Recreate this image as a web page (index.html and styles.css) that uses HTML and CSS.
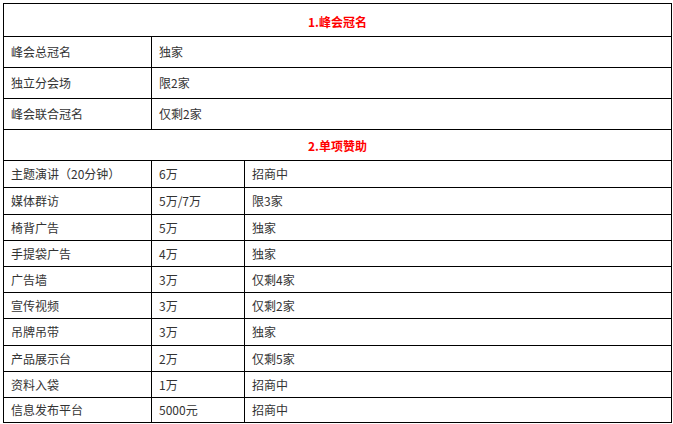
FILE: index.html
```html
<!DOCTYPE html>
<html lang="zh">
<head>
<meta charset="utf-8">
<title>赞助方案</title>
<link rel="stylesheet" href="styles.css">
</head>
<body>
<table class="sponsor">
  <colgroup>
    <col class="c1">
    <col class="c2">
    <col class="c3">
  </colgroup>
  <tr class="head head-first"><td colspan="3">1.峰会冠名</td></tr>
  <tr class="big"><td>峰会总冠名</td><td colspan="2">独家</td></tr>
  <tr class="big"><td>独立分会场</td><td colspan="2">限2家</td></tr>
  <tr class="big"><td>峰会联合冠名</td><td colspan="2">仅剩2家</td></tr>
  <tr class="head"><td colspan="3">2.单项赞助</td></tr>
  <tr class="small tall"><td>主题演讲（20分钟）</td><td>6万</td><td>招商中</td></tr>
  <tr class="small tall"><td>媒体群访</td><td>5万/7万</td><td>限3家</td></tr>
  <tr class="small"><td>椅背广告</td><td>5万</td><td>独家</td></tr>
  <tr class="small"><td>手提袋广告</td><td>4万</td><td>独家</td></tr>
  <tr class="small"><td>广告墙</td><td>3万</td><td>仅剩4家</td></tr>
  <tr class="small"><td>宣传视频</td><td>3万</td><td>仅剩2家</td></tr>
  <tr class="small tall"><td>吊牌吊带</td><td>3万</td><td>独家</td></tr>
  <tr class="small"><td>产品展示台</td><td>2万</td><td>仅剩5家</td></tr>
  <tr class="small"><td>资料入袋</td><td>1万</td><td>招商中</td></tr>
  <tr class="small short"><td>信息发布平台</td><td>5000元</td><td>招商中</td></tr>
</table>
</body>
</html>
```

FILE: styles.css
```css
html, body {
  margin: 0;
  padding: 0;
  background: #ffffff;
}
body {
  padding: 3px 0 0 3px;
  font-family: "Noto Sans CJK SC", "Liberation Sans", sans-serif;
  font-size: 12px;
  color: #333333;
}
.sponsor {
  border-collapse: collapse;
  table-layout: fixed;
  width: 668px;
}
.c1 { width: 148px; }
.c2 { width: 93px; }
.c3 { width: 427px; }
.sponsor td {
  border: 1px solid #000000;
  padding: 0 0 0 7px;
  line-height: 16px;
  vertical-align: middle;
  white-space: nowrap;
}
.head td {
  height: 28px;
  text-align: center;
  color: #ff0000;
  font-weight: bold;
  padding: 2px 0 0 0;
}
.head-first td {
  height: 29px;
  padding-top: 3px;
}
.big td {
  height: 30px;
}
.small td {
  height: 25px;
}
.small.tall td {
  height: 26px;
}
.small.short td {
  height: 24px;
}
```
